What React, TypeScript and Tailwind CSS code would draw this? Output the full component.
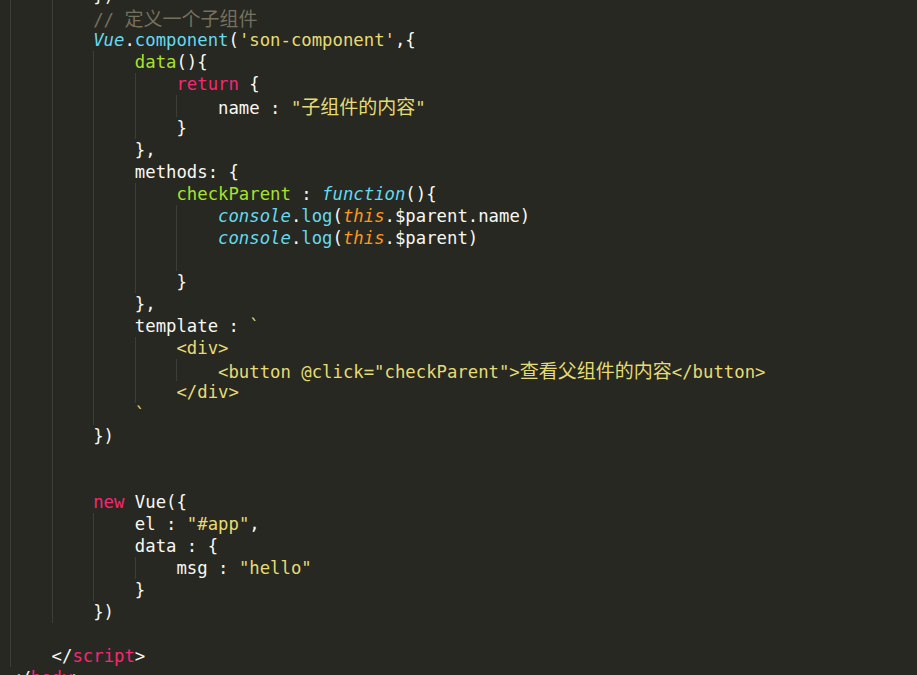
import React from "react";

// token kinds -> tailwind classes (monokai)
const TONE: Record<string, string> = {
    w: "text-[#f8f8f2]",
    c: "text-[#75715e]",
    k: "text-[#f92672]",
    s: "text-[#e6db74]",
    f: "text-[#a6e22e]",
    b: "text-[#66d9ef]",
    bi: "text-[#66d9ef] italic",
    o: "text-[#fd971f] italic",
};

type Tok = [string, string];
type Line = { indent: number; guides?: number; toks: Tok[] };

const LINES: Line[] = [
    { indent: 2, toks: [["})", "w"]] },
    { indent: 2, toks: [["// 定义一个子组件", "c"]] },
    { indent: 2, toks: [["Vue", "bi"], [".", "w"], ["component", "b"], ["(", "w"], ["'son-component'", "s"], [",{", "w"]] },
    { indent: 3, toks: [["data", "f"], ["(){", "w"]] },
    { indent: 4, toks: [["return", "k"], [" {", "w"]] },
    { indent: 5, toks: [["name : ", "w"], ['"子组件的内容"', "s"]] },
    { indent: 4, toks: [["}", "w"]] },
    { indent: 3, toks: [["},", "w"]] },
    { indent: 3, toks: [["methods: {", "w"]] },
    { indent: 4, toks: [["checkParent", "f"], [" : ", "w"], ["function", "bi"], ["(){", "w"]] },
    { indent: 5, toks: [["console", "bi"], [".", "w"], ["log", "b"], ["(", "w"], ["this", "o"], [".$parent.name)", "w"]] },
    { indent: 5, toks: [["console", "bi"], [".", "w"], ["log", "b"], ["(", "w"], ["this", "o"], [".$parent)", "w"]] },
    { indent: 0, guides: 5, toks: [] },
    { indent: 4, toks: [["}", "w"]] },
    { indent: 3, toks: [["},", "w"]] },
    { indent: 3, toks: [["template : ", "w"], ["`", "s"]] },
    { indent: 4, toks: [["<div>", "s"]] },
    { indent: 5, toks: [['<button @click="checkParent">查看父组件的内容</button>', "s"]] },
    { indent: 4, toks: [["</div>", "s"]] },
    { indent: 3, toks: [["`", "s"]] },
    { indent: 2, toks: [["})", "w"]] },
    { indent: 0, guides: 2, toks: [] },
    { indent: 0, guides: 2, toks: [] },
    { indent: 2, toks: [["new", "k"], [" Vue({", "w"]] },
    { indent: 3, toks: [["el : ", "w"], ['"#app"', "s"], [",", "w"]] },
    { indent: 3, toks: [["data : {", "w"]] },
    { indent: 4, toks: [["msg : ", "w"], ['"hello"', "s"]] },
    { indent: 3, toks: [["}", "w"]] },
    { indent: 2, toks: [["})", "w"]] },
    { indent: 0, guides: 1, toks: [] },
    { indent: 1, toks: [["</", "w"], ["script", "k"], [">", "w"]] },
    { indent: 0, toks: [["</", "w"], ["body", "k"], [">", "w"]] },
];

// split latin / han so the han glyphs get the wider cjk face
function Chunk({ text }: { text: string }) {
    const parts = text.split(/([\u4e00-\u9fff]+)/);
    return (
        <>
            {parts.map((p, i) =>
                /[\u4e00-\u9fff]/.test(p) ? (
                    <span key={i} className="font-['Noto_Sans_CJK_SC',sans-serif] text-[19px]">{p}</span>
                ) : (
                    <React.Fragment key={i}>{p}</React.Fragment>
                )
            )}
        </>
    );
}

export default function App() {
    return (
        <div className="w-full h-[675px] overflow-hidden bg-[#272822] pl-[10px]">
            <div className="-mt-[15px] flex flex-col font-['DejaVu_Sans_Mono',monospace] text-[17.3px]">
                {LINES.map((line, n) => {
                    const guides = line.guides ?? line.indent;
                    return (
                        <div className="flex h-[22px] leading-[22px] whitespace-pre" key={n}>
                            {Array.from({ length: guides }).map((_, g) => (
                                <span key={g} className="w-[4ch] shrink-0 h-full border-l border-[#3d3e37]" />
                            ))}
                            <span>
                                {line.toks.map(([t, k], i) => (
                                    <span key={i} className={TONE[k]}>
                                        <Chunk text={t} />
                                    </span>
                                ))}
                            </span>
                        </div>
                    );
                })}
            </div>
        </div>
    );
}
